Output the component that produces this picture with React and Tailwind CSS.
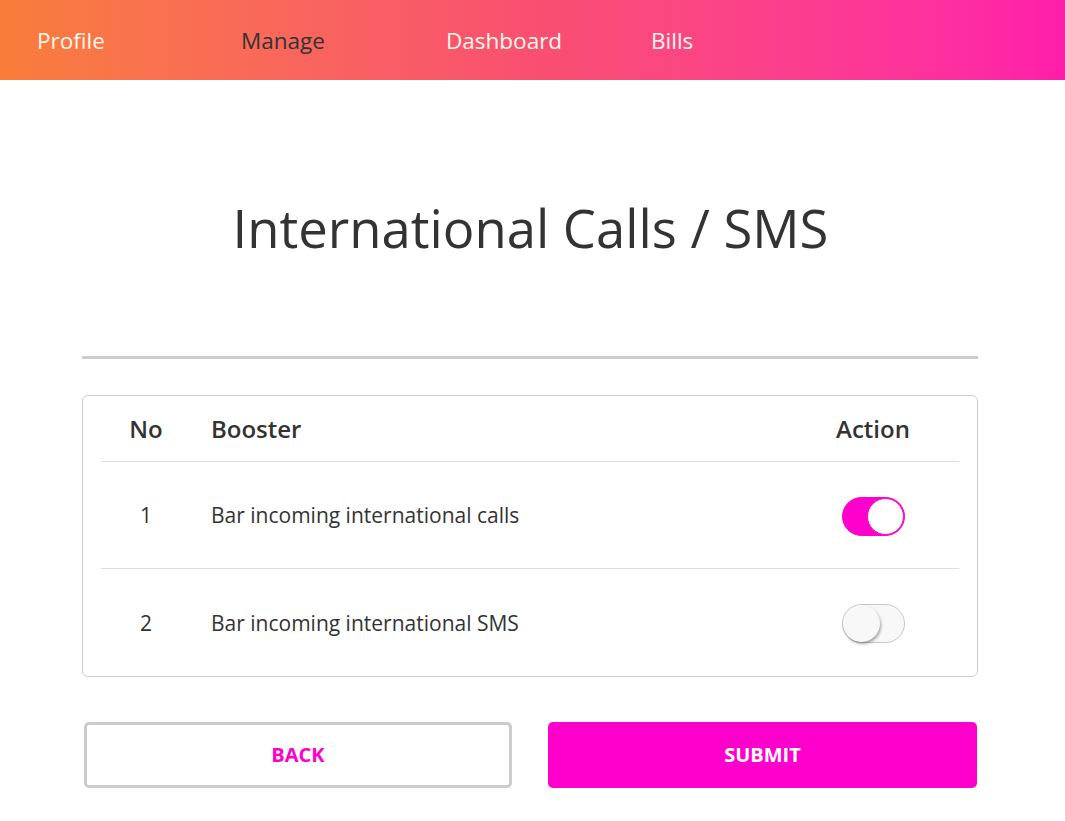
import React, { useState } from "react";

function Toggle({ on, onClick }) {
  return (
    <button
      onClick={onClick}
      className={
        "relative w-[63px] h-[39px] rounded-full border " +
        (on ? "bg-[#ff00cc] border-[#ff00cc]" : "bg-[#f8f8f8] border-[#c8c8c8]")
      }
    >
      <span
        className={
          "absolute top-[0px] w-[37px] h-[37px] rounded-full " +
          (on
            ? "right-[0px] bg-white border border-[#ff00cc]"
            : "left-[0px] bg-[#f8f8f8] shadow-[1px_2px_3px_rgba(0,0,0,0.35)]")
        }
      />
    </button>
  );
}

export default function App() {
  const [rows, setRows] = useState([
    { no: 1, name: "Bar incoming international calls", on: true },
    { no: 2, name: "Bar incoming international SMS", on: false },
  ]);
  const font = { fontFamily: '"Open Sans", sans-serif' };
  return (
    <div className="min-h-[821px] bg-white text-[#333]" style={font}>
      <nav className="h-20 flex items-center pt-[2px] bg-gradient-to-r from-[#f97d3a] via-[#f94f70] to-[#ff1dab] text-[22.5px]">
        <a className="ml-[37px] w-[204px] text-[#fff8ea]">Profile</a>
        <a className="w-[205px] text-[#333]">Manage</a>
        <a className="w-[205px] text-[#fff8ea]">Dashboard</a>
        <a className="text-[#fff8ea]">Bills</a>
      </nav>

      <h1 className="text-center text-[52.6px] leading-none mt-[122px] pr-[4px] text-[#333]">
        International Calls / SMS
      </h1>

      <div className="w-[896px] ml-[82px] mt-[101px]">
        <div className="h-[3px] bg-[#cccccc]" />

        <div className="mt-[36px] border border-[#cccccc] rounded-[6px] px-[18px]">
          <div className="h-[66px] flex items-center pt-[2px] text-[24px] font-semibold border-b border-[#dddddd]">
            <div className="w-[90px] text-center">No</div>
            <div className="flex-1 pl-[20px]">Booster</div>
            <div className="w-[172px] text-center">Action</div>
          </div>
          {rows.map((r, i) => (
            <div
              key={r.no}
              className={
                "h-[107px] flex items-center text-[21px] " +
                (i < rows.length - 1 ? "border-b border-[#dddddd]" : "")
              }
            >
              <div className="w-[90px] text-center pt-[3px]">{r.no}</div>
              <div className="flex-1 pl-[20px] pt-[3px]">{r.name}</div>
              <div className="w-[172px] flex justify-center pt-[3px]">
                <Toggle
                  on={r.on}
                  onClick={() =>
                    setRows(rows.map((x) => (x.no === r.no ? { ...x, on: !x.on } : x)))
                  }
                />
              </div>
            </div>
          ))}
        </div>

        <div className="mt-[45px] flex gap-[36px] pl-[2px]">
          <button className="w-[428px] shrink-0 h-[66px] border-[3px] border-[#cccccc] rounded-[5px] text-[#ff00cc] font-bold text-[20px]">
            BACK
          </button>
          <button className="w-[429px] shrink-0 h-[66px] bg-[#ff00cc] rounded-[5px] text-white font-bold text-[20px]">
            SUBMIT
          </button>
        </div>
      </div>
    </div>
  );
}
